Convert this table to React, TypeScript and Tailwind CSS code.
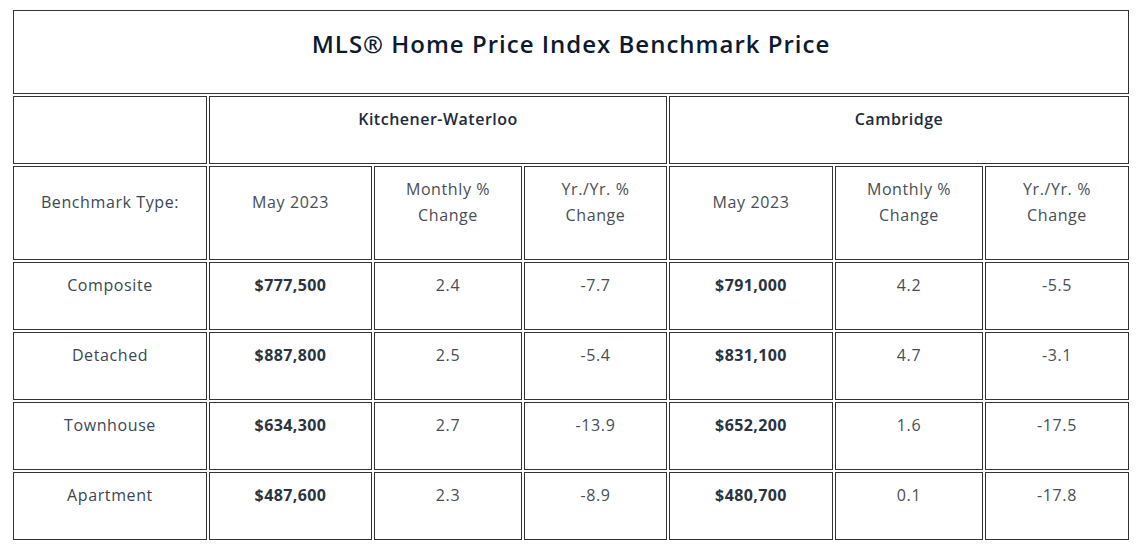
import React from "react";

const cell = "border border-[#333333] flex items-center justify-center text-center";

type Row = { type: string; kw: string; kwM: string; kwY: string; cb: string; cbM: string; cbY: string };

const rows: Row[] = [
  { type: "Composite", kw: "$777,500", kwM: "2.4", kwY: "-7.7", cb: "$791,000", cbM: "4.2", cbY: "-5.5" },
  { type: "Detached", kw: "$887,800", kwM: "2.5", kwY: "-5.4", cb: "$831,100", cbM: "4.7", cbY: "-3.1" },
  { type: "Townhouse", kw: "$634,300", kwM: "2.7", kwY: "-13.9", cb: "$652,200", cbM: "1.6", cbY: "-17.5" },
  { type: "Apartment", kw: "$487,600", kwM: "2.3", kwY: "-8.9", cb: "$480,700", cbM: "0.1", cbY: "-17.8" },
];

function Txt({ children, className = "" }: { children: React.ReactNode; className?: string }) {
  return <p className={`text-[16px] leading-[26px] mb-[23px] ${className}`}>{children}</p>;
}

const plain = "tracking-[0.6px] text-[#474e56]";
const label = "tracking-[0.6px] text-[#3b4754]";
const price = "font-bold tracking-[0.4px] text-[#2a3440]";

export default function App() {
  return (
    <div className="bg-white w-[1142px] h-[553px] pl-[13px] pt-[10px] font-['Open_Sans',sans-serif]">
      <div className="grid grid-cols-[194px_163px_148px_143px_164px_148px_144px] grid-rows-[84px_68px_94px_68px_68px_68px_68px] gap-[2px]">
        <div className={`${cell} col-span-7 items-start pt-[18px]`}>
          <h2 className="text-[24px] leading-[30px] font-semibold tracking-[1px] text-[#0c1a30]">MLS® Home Price Index Benchmark Price</h2>
        </div>

        <div className={cell}></div>
        <div className={`${cell} col-span-3`}>
          <Txt className="font-semibold tracking-[0.5px] text-[#1e2b3a]">Kitchener-Waterloo</Txt>
        </div>
        <div className={`${cell} col-span-3`}>
          <Txt className="font-semibold tracking-[0.5px] text-[#1e2b3a]">Cambridge</Txt>
        </div>

        <div className={cell}><Txt className={label}>Benchmark Type:</Txt></div>
        <div className={cell}><Txt className={plain}>May 2023</Txt></div>
        <div className={cell}><Txt className={plain}>Monthly %<br />Change</Txt></div>
        <div className={cell}><Txt className={plain}>Yr./Yr. %<br />Change</Txt></div>
        <div className={cell}><Txt className={plain}>May 2023</Txt></div>
        <div className={cell}><Txt className={plain}>Monthly %<br />Change</Txt></div>
        <div className={cell}><Txt className={plain}>Yr./Yr. %<br />Change</Txt></div>

        {rows.map((r) => (
          <React.Fragment key={r.type}>
            <div className={cell}><Txt className={label}>{r.type}</Txt></div>
            <div className={cell}><Txt className={price}>{r.kw}</Txt></div>
            <div className={cell}><Txt className={plain}>{r.kwM}</Txt></div>
            <div className={cell}><Txt className={plain}>{r.kwY}</Txt></div>
            <div className={cell}><Txt className={price}>{r.cb}</Txt></div>
            <div className={cell}><Txt className={plain}>{r.cbM}</Txt></div>
            <div className={cell}><Txt className={plain}>{r.cbY}</Txt></div>
          </React.Fragment>
        ))}
      </div>
    </div>
  );
}
